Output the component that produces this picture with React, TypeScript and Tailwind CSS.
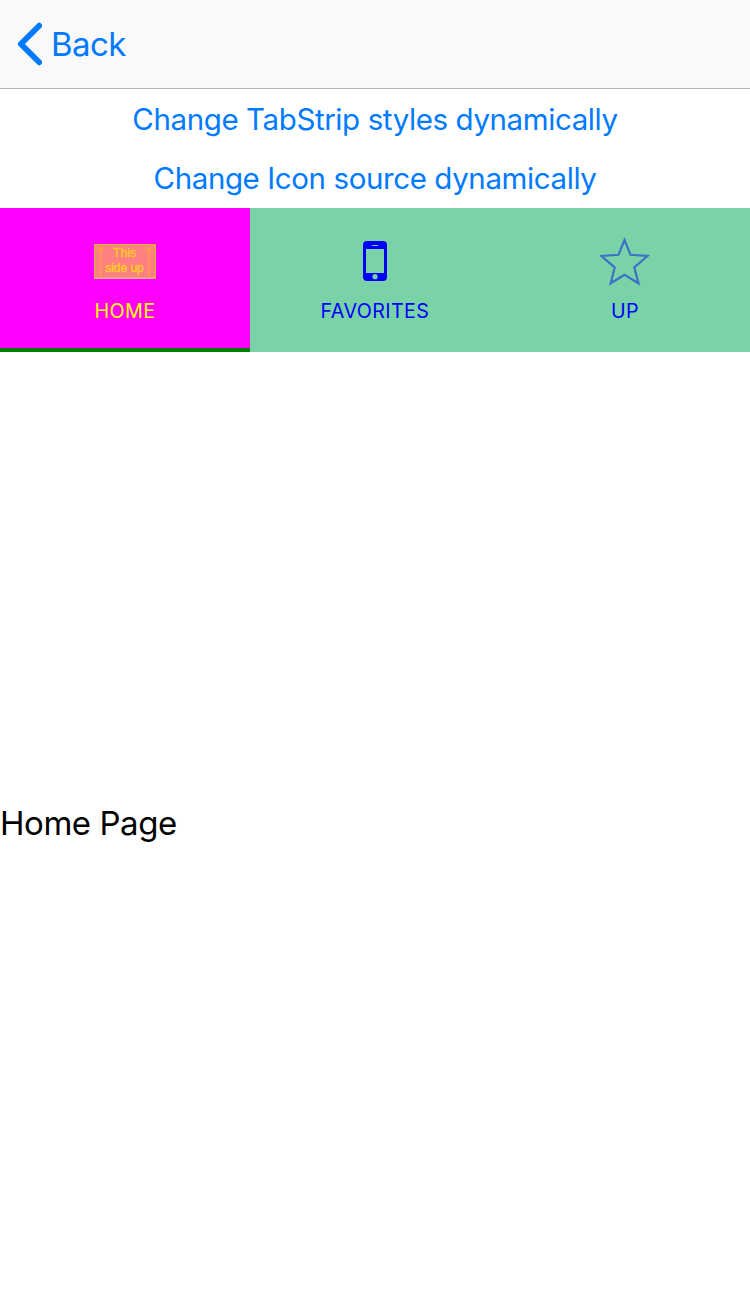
import type { ReactNode } from "react";

function BackChevron() {
  return (
    <svg width="26" height="44" viewBox="0 0 26 44" fill="none" className="shrink-0">
      <path d="M23.200 3.700 4.900 22 23.200 40.300" stroke="#007aff" strokeWidth="5.800" strokeLinecap="round" strokeLinejoin="round" />
    </svg>
  );
}

function SideUpIcon() {
  return (
    <svg width="62" height="36" viewBox="0 0 62 36" fill="none">
      <rect x="0.5" y="1.5" width="61" height="33.500" fill="#ff8080" stroke="#d6b62c" />
      <path d="M0.500 35.300H61.500" stroke="#f4c0a0" strokeWidth="1" />
      <g stroke="#ffa04a" strokeWidth="1.4">
        <path d="M7 33V4M3.500 8 7 4l3.500 4" />
        <path d="M55 33V4M51.500 8 55 4l3.500 4" />
      </g>
      <g fill="#ffc828" stroke="#ffc828" strokeWidth="0.500" fontFamily="Liberation Sans, sans-serif" fontSize="12" textAnchor="middle">
        <text x="30.500" y="14" textLength="23">This</text>
        <text x="30.500" y="28.500" textLength="38.500">side up</text>
      </g>
    </svg>
  );
}

function PhoneIcon() {
  return (
    <svg width="24" height="40" viewBox="0 0 24 40">
      <rect width="24" height="40" rx="4" fill="#0000ff" />
      <rect x="3" y="8" width="18" height="24" fill="#7ad3a7" />
      <rect x="9" y="3.900" width="6" height="1.200" rx="0.600" fill="#7ad3a7" />
      <circle cx="12" cy="35.700" r="2.600" fill="#7ad3a7" />
    </svg>
  );
}

function StarIcon() {
  return (
    <svg width="50" height="50" viewBox="0 0 50 50" fill="none">
      <path d="M24.500 4 30.500 18.800 47.500 20 34.300 31.300 38.500 47.300 24.500 38.700 10.700 47.300 14.700 31.300 1.500 20 18.500 18.800Z" stroke="#3c71c8" strokeWidth="2.200" />
    </svg>
  );
}

function Tab({ icon, label, active = false }: { icon: ReactNode; label: string; active?: boolean }) {
  return (
    <button
      className={
        active
          ? "flex flex-col items-center border-b-4 border-[#008000] bg-[#ff00ff] pt-[23px] text-[#ffff00]"
          : "flex flex-col items-center bg-[#7ad3a7] pt-[23px] text-[#0000ff]"
      }
    >
      <span className="flex h-[60px] items-center">{icon}</span>
      <span className="mt-2 text-[19.7px] leading-6 tracking-[0.4px]">{label}</span>
    </button>
  );
}

export default function App() {
  return (
    <div className="flex h-[1294px] w-[750px] flex-col bg-white font-['Inter',sans-serif] text-black">
      <header className="flex h-[89px] items-center border-b border-[#b2b2b2] bg-[#f9f9f9] pl-4">
        <button className="flex items-center gap-[9px] text-[33px] leading-10 tracking-[-0.6px] text-[#007aff]">
          <BackChevron />
          <span>Back</span>
        </button>
      </header>
      <div className="flex h-[119px] flex-col text-[29.5px] tracking-[-0.4px] text-[#007aff]">
        <button className="h-[60px]">Change TabStrip styles dynamically</button>
        <button className="h-[60px]">Change Icon source dynamically</button>
      </div>
      <nav className="grid h-36 grid-cols-3">
        <Tab icon={<SideUpIcon />} label="HOME" active />
        <Tab icon={<PhoneIcon />} label="FAVORITES" />
        <Tab icon={<StarIcon />} label="UP" />
      </nav>
      <main className="flex flex-1 items-center pt-0.5 text-[33px] tracking-[-0.45px]">
        <p>Home Page</p>
      </main>
    </div>
  );
}
